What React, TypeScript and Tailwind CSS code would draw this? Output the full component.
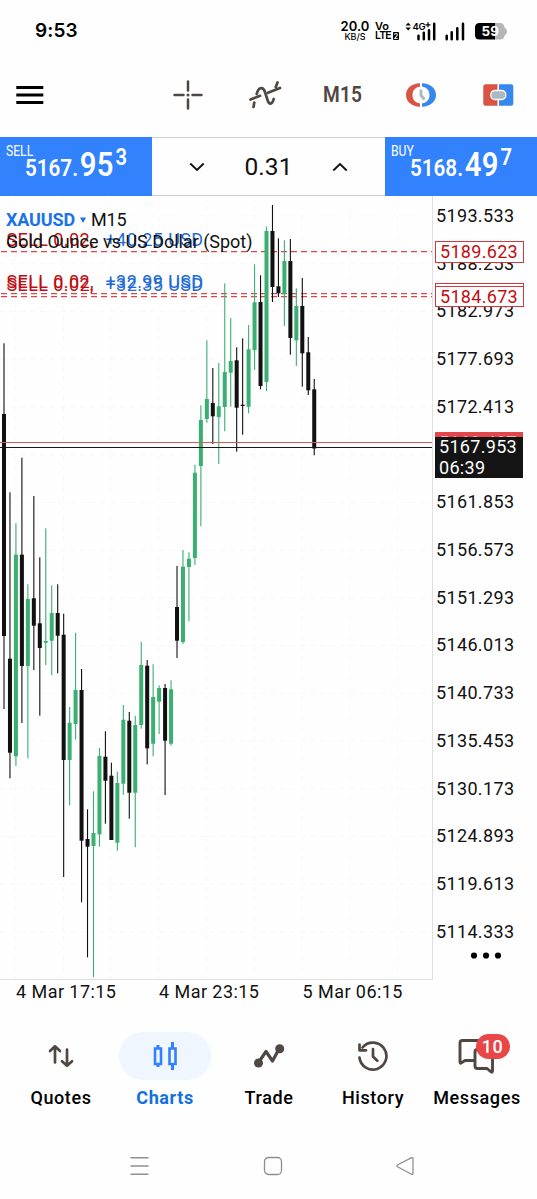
import type { ReactNode } from "react";

import clsx from "clsx";

// wick top, body top, body bottom, wick bottom, direction
type Candle = [number, number, number, number, "up" | "down"];

const CHART_TOP = 196;
const CANDLE_STEP = 5.966;

const CANDLES: Candle[] = [
  [343.3, 414, 636, 709, "down"],
  [492.3, 658.7, 752.7, 778.3, "down"],
  [523.3, 554.7, 756.3, 766, "up"],
  [457.7, 554.7, 666, 723, "down"],
  [584.3, 599, 666, 758.3, "up"],
  [496, 598.3, 625.7, 670, "down"],
  [557.3, 623.3, 648, 715.7, "down"],
  [528.3, 641, 642.8, 665, "up"],
  [585.3, 613, 640.7, 675.3, "up"],
  [584.3, 613, 635.7, 673.3, "down"],
  [613.7, 634.7, 760, 877, "down"],
  [707, 722.7, 760, 805.3, "up"],
  [632.7, 690, 724, 739.7, "up"],
  [669, 690, 840.7, 902.3, "down"],
  [809.3, 839, 846.7, 957.3, "down"],
  [791.3, 833, 846, 977, "up"],
  [748, 756, 834.3, 846.7, "up"],
  [731.3, 756.7, 780.7, 823.7, "down"],
  [762.7, 775.7, 840, 840, "down"],
  [771.7, 783, 842.7, 850.7, "up"],
  [705, 719.7, 783.7, 794.7, "up"],
  [712, 720.7, 792.7, 818.7, "down"],
  [715.7, 725, 792.7, 847.3, "up"],
  [641.7, 665, 725, 728.7, "up"],
  [660, 665.7, 748.3, 764.3, "down"],
  [664.3, 697, 743.7, 756.3, "up"],
  [685.3, 688, 701.7, 734, "up"],
  [684, 688, 740.7, 795, "down"],
  [680.3, 689.3, 743.7, 745.7, "up"],
  [566, 607, 640.7, 658, "down"],
  [550, 566.7, 642, 644, "up"],
  [552.3, 558.7, 567, 621.3, "up"],
  [464.7, 472.7, 558, 565, "up"],
  [405.3, 420, 466, 526.3, "up"],
  [340.3, 399, 419, 422.7, "up"],
  [368, 403, 416.3, 444, "down"],
  [363, 406.3, 417, 464, "up"],
  [283.3, 372, 407, 431.3, "up"],
  [318, 361, 372.7, 406.7, "up"],
  [347.3, 360.3, 407.7, 451.7, "down"],
  [338.3, 404.7, 406, 434.7, "down"],
  [325, 349.3, 406.7, 413.3, "up"],
  [264.3, 302.3, 350, 370, "up"],
  [275.3, 302, 386, 389.3, "down"],
  [226.7, 231, 382, 391, "up"],
  [205, 231, 287, 302, "down"],
  [238.3, 286.3, 293.3, 297, "down"],
  [240.3, 261, 294, 326, "up"],
  [239, 261, 338, 354.7, "down"],
  [288.3, 306, 340.3, 366, "up"],
  [278, 306, 353.3, 386.7, "down"],
  [337, 352.3, 390.3, 395, "down"],
  [379, 389.3, 448.5, 455.3, "down"],
];

const PRICES = [
  "5193.533", "5188.253", "5182.973", "5177.693", "5172.413", "5167.133", "5161.853", "5156.573",
  "5151.293", "5146.013", "5140.733", "5135.453", "5130.173", "5124.893", "5119.613", "5114.333",
];

const GRID_X = [15.7, 63.4, 111.1, 158.8, 206.6, 254.3, 302, 349.7, 397.5];
const ORDER_LINES = [251.7, 293.6, 296.6];

function StatusBar() {
  return (
    <header className="flex h-[60px] items-start justify-between pr-[29px] pl-[35px] text-black">
      <span className="mt-[18px] font-['Inter'] text-[19px] leading-[25px] font-semibold tracking-[0.1px]">9:53</span>
      <div className="mt-[21px] flex items-start font-['Inter'] font-semibold">
        <div className="flex w-[30px] flex-col items-center">
          <span className="text-[13px] leading-[11px] tracking-[0.1px]">20.0</span>
          <span className="text-[9px] leading-[9px] font-medium">KB/S</span>
        </div>
        <div className="ml-[3px] flex w-[27px] flex-col items-start pl-[2px]">
          <span className="text-[11px] leading-[10px] tracking-[-0.2px]">Vo</span>
          <span className="flex items-center text-[10.5px] leading-[10px] tracking-[-0.8px]">
            LTE
            <span className="ml-[2px] flex h-[8px] w-[6px] items-center justify-center rounded-[1px] bg-black text-[7px] leading-[7px] tracking-normal text-white">2</span>
          </span>
        </div>
        <svg className="ml-[3px]" width="82" height="22" viewBox="0 0 82 22">
          <path d="M2.500 4.600 5.200 1.800 7.900 4.600zM2.500 6.600 5.200 9.400 7.900 6.600z" fill="#000" />
          <text x="9.500" y="8.500" fontFamily="Inter" fontSize="9.500" fontWeight="600" letterSpacing="-0.300">4G</text>
          <path d="M25 1.300v5M22.500 3.800h5" stroke="#000" strokeWidth="1.200" />
          <path d="M15.500 14.800v3.400M20.800 11.800v6.400M26 9.300v8.900M31.200 2.800v15.400" stroke="#000" strokeWidth="2.500" strokeLinecap="round" />
          <path d="M43.700 14.800v3.400M48.700 11.300v6.900M54.300 7.300v10.900M60 2.800v15.400" stroke="#000" strokeWidth="2.500" strokeLinecap="round" />
        </svg>
        <svg className="-ml-[10px]" width="33" height="19" viewBox="0 0 33 19">
          <path d="M19 2h6q4 0 4.500 4.500q2.500 1 2.500 4t-2.500 4q-.5 4-4.500 4h-6z" fill="#b6b6b6" />
          <path d="M20 2H4.500Q0 2 0 6.500v7.500Q0 18.500 4.500 18.500H20z" fill="#000" />
          <text x="6.500" y="15" fontFamily="Inter" fontSize="13.500" fontWeight="700" fill="#fff">59</text>
        </svg>
      </div>
    </header>
  );
}

function Toolbar() {
  return (
    <div className="flex h-[77px] items-center pb-[8px] pl-[16px]">
      <svg width="28" height="20" viewBox="0 0 28 20">
        <path d="M.3 2.500h27M.3 10h27M.3 17.500h27" stroke="#000" strokeWidth="2.800" />
      </svg>
      <svg className="ml-[129px]" width="30" height="30" viewBox="0 0 30 30" stroke="#4f4744" strokeWidth="2.500" strokeLinecap="round">
        <path d="M15 1.500v9M15 19.500v9M1.500 15h9M19.500 15h9" />
        <path d="M15 14.900v.2" strokeWidth="3" />
      </svg>
      <svg className="ml-[45px]" width="34" height="30" viewBox="0 0 34 30" fill="none" stroke="#4f4744" strokeWidth="2.700" strokeLinecap="round">
        <path d="M5.500 27 6.300 22.500M8.700 14c1.500-6 6-8.500 8.300-2l2.700 8.500c1.500 4.500 4.500 4.200 6-1.500" />
        <path d="M2.500 19.500 12 15.800M20 12.800 32 8M27.800 7 29.500 2.500" />
      </svg>
      <span className="ml-[41px] w-[42px] origin-left scale-x-[0.87] text-[22px] leading-[28px] font-semibold tracking-[0.2px] text-[#4f4744]">M15</span>
      <svg className="ml-[40px]" width="32" height="26" viewBox="0 0 32 26">
        <path d="M15 1.300C7 1.300 1 6.300 1 13s6 11.700 14 11.700v-3.200C10 20.500 7.500 17.500 7.500 13S10 5.500 15 4.500z" fill="#d95443" />
        <path d="M17 1.300C25 1.300 31 6.300 31 13s-6 11.700-14 11.700v-3.200c5-1 7.500-4 7.500-8.500S22 5.500 17 4.500z" fill="#3687ee" />
        <path d="M16 7.500v6l3.500 4" fill="none" stroke="#adb9c1" strokeWidth="2.800" />
      </svg>
      <svg className="ml-[46px]" width="31" height="22" viewBox="0 0 31 22">
        <path d="M2.500.3H14.500V21.700H2.500Q.3 21.700.3 19.500V2.500Q.3.300 2.500.3z" fill="#d95443" />
        <path d="M16 .3h12Q30.300.3 30.300 2.500v17q0 2.200-2.300 2.200H16z" fill="#3687ee" />
        <rect x="7.800" y="6.500" width="15" height="9" rx="4" fill="#adb9c1" stroke="#fff" strokeWidth="1.300" />
      </svg>
    </div>
  );
}

function QuoteButton({ label, whole, pips, point }: { label: string; whole: string; pips: string; point: string }) {
  return (
    <button type="button" className="relative h-full w-[152px] shrink-0 overflow-hidden bg-[#3281fd] text-left text-white">
      <span className="absolute top-[5px] left-[6px] origin-left scale-x-[0.81] text-[15px] leading-[18px]">{label}</span>
      <span className="absolute top-[7px] left-[24.5px] flex origin-left scale-x-[0.86] items-baseline font-semibold">
        <span className="text-[24px] leading-[40px]">{whole}</span>
        <span className="ml-[2px] text-[34px] leading-[40px] tracking-[0.3px]">{pips}</span>
        <span className="relative -top-[11.5px] ml-[2px] text-[23.5px] leading-[24px]">{point}</span>
      </span>
    </button>
  );
}

function Chevron({ direction }: { direction: "up" | "down" }) {
  return (
    <svg width="16" height="10" viewBox="0 0 16 10" fill="none" stroke="#111" strokeWidth="1.900">
      <path d={direction === "down" ? "M1.300 1.500 8 8l6.700-6.500" : "M1.300 8.500 8 2l6.700 6.500"} />
    </svg>
  );
}

function TradePanel() {
  return (
    <div className="flex h-[59px]">
      <QuoteButton label="SELL" whole="5167." pips="95" point="3" />
      <div className="flex flex-1 items-center justify-between border-y border-[#cfcfcf] px-[37px]">
        <Chevron direction="down" />
        <span className="text-[24.5px] leading-[30px] tracking-[0.1px] text-[#111]">0.31</span>
        <Chevron direction="up" />
      </div>
      <QuoteButton label="BUY" whole="5168." pips="49" point="7" />
    </div>
  );
}

function OrderLabel({ profit, className }: { profit: string; className: string }) {
  return (
    <div className={clsx("absolute left-[6.5px] flex text-[18px] leading-[20px] tracking-[0.4px] whitespace-nowrap", className)}>
      <span className="w-[99px] text-[#c00d12]">SELL 0.02,</span>
      <span className="text-[#1f6bd6]">{profit}</span>
    </div>
  );
}

function CandleChart() {
  return (
    <div className="relative h-full w-[433px] shrink-0 border-r border-b border-[#e0e0e0]">
      <svg className="block" width="432" height="783" viewBox={`0 ${CHART_TOP} 432 783`}>
        <g stroke="#f9f9f9" strokeDasharray="5 5">
          {GRID_X.map((x) => (
            <path key={x} d={`M${x} 196V979`} />
          ))}
          {PRICES.map((price, index) => (
            <path key={price} d={`M0 ${216 + index * 47.73}H432`} />
          ))}
        </g>
        <g stroke="#d8474c" strokeWidth="1.300" strokeDasharray="6 4">
          {ORDER_LINES.map((y) => (
            <path key={y} d={`M1 ${y}H432`} />
          ))}
        </g>
        {CANDLES.map(([high, top, bottom, low, direction], index) => {
          const x = 4 + index * CANDLE_STEP;
          const color = direction === "up" ? "#39b071" : "#111";
          return (
            <g key={index} fill={color}>
              <rect x={x - 0.55} y={high} width={1.1} height={low - high} />
              <rect x={x - 2} y={top} width={4} height={bottom - top} />
            </g>
          );
        })}
        <path d="M0 442.500H432" stroke="#cf5a5a" />
        <path d="M0 447.500H432" stroke="#161616" strokeWidth="1.200" />
      </svg>
      <OrderLabel profit="+40.25 USD" className="top-[34px]" />
      <OrderLabel profit="+32.35 USD" className="top-[78.5px]" />
      <OrderLabel profit="+32.99 USD" className="top-[75.5px]" />
      <div className="absolute top-[13px] left-[6px] flex items-center text-[18px] leading-[22px] text-[#111]">
        <span className="font-bold tracking-[-0.15px] text-[#1a73e8]">XAUUSD</span>
        <svg className="mr-[5px] ml-[5px]" width="6" height="6" viewBox="0 0 6 6">
          <path d="M0 .5h6L3 6z" fill="#1a73e8" />
        </svg>
        <span className="tracking-[-0.2px]">M15</span>
      </div>
      <span className="absolute top-[35px] left-[6px] text-[18px] leading-[22px] tracking-[-0.02px] whitespace-nowrap text-[#111]">
        Gold Ounce vs US Dollar (Spot)
      </span>
    </div>
  );
}

function PriceTag({ children, className }: { children: ReactNode; className: string }) {
  return <div className={clsx("absolute pl-[4px] text-[18px] tracking-[0.3px]", className)}>{children}</div>;
}

function PriceAxis() {
  return (
    <div className="relative flex-1 text-[#111]">
      {PRICES.map((price, index) => (
        <div key={price} className={clsx("flex h-[47.73px] items-start pl-[3px] text-[18px] tracking-[0.35px]", index === 0 && "mt-[9px]")}>
          <span className="leading-[22px]">{price}</span>
        </div>
      ))}
      <PriceTag className="top-[45px] left-[2px] h-[22px] w-[89px] border border-[#d2383c] bg-white leading-[19px] text-[#c00d12]">5189.623</PriceTag>
      <PriceTag className="top-[87px] left-[2px] h-[22px] w-[89px] border border-[#d2383c] bg-white leading-[19px] text-[#c00d12]">5185.023</PriceTag>
      <PriceTag className="top-[90px] left-[2px] h-[21px] w-[89px] border border-[#d2383c] bg-white leading-[19px] text-[#c00d12]">5184.673</PriceTag>
      <PriceTag className="top-[236px] left-[2px] h-[22px] w-[88px] bg-[#e2474b] leading-[22px] text-[#f7b5b5]">5168.497</PriceTag>
      <PriceTag className="top-[241px] left-[2px] h-[41px] w-[88px] bg-[#141414] text-white">
        <div className="leading-[20px]">5167.953</div>
        <div className="leading-[22px]">06:39</div>
      </PriceTag>
      <svg className="absolute top-[756px] left-[37px]" width="32" height="7" viewBox="0 0 32 7">
        <circle cx="4" cy="3.500" r="3.100" />
        <circle cx="16" cy="3.500" r="3.100" />
        <circle cx="28" cy="3.500" r="3.100" />
      </svg>
    </div>
  );
}

function TimeAxis() {
  return (
    <div className="flex h-[52px] pt-px pl-[16px] text-[18px] leading-[22px] tracking-[0.45px] text-[#111]">
      <span className="w-[143px]">4 Mar 17:15</span>
      <span className="w-[143.5px]">4 Mar 23:15</span>
      <span>5 Mar 06:15</span>
    </div>
  );
}

function NavItem({ label, active = false, children }: { label: string; active?: boolean; children: ReactNode }) {
  return (
    <button type="button" className="flex w-[104px] shrink-0 flex-col items-center">
      <span className={clsx("flex h-[48px] w-[92px] items-center justify-center rounded-full", active && "bg-[#eff6fd]")}>{children}</span>
      <span
        className={clsx(
          "mt-[7px] ml-px text-[18px] leading-[22px] tracking-[0.6px]",
          active ? "font-bold text-[#1270e3]" : "font-medium text-black",
        )}
      >
        {label}
      </span>
    </button>
  );
}

function BottomNav() {
  return (
    <nav className="flex h-[100px] pl-[8.5px]">
      <NavItem label="Quotes">
        <svg width="26" height="24" viewBox="0 0 26 24" fill="none" stroke="#4f4744" strokeWidth="2.700" strokeLinecap="round" strokeLinejoin="round">
          <path d="M7 18.500V2.500M2 7 7 2.300 12 7M19 5.500v16M14 17.200l5 4.600 5-4.600" />
        </svg>
      </NavItem>
      <NavItem label="Charts" active>
        <svg width="26" height="30" viewBox="0 0 26 30" fill="none" stroke="#3281fd">
          <path d="M3 7.500h6v15.500H3zM17.500 7.500h6v15.500h-6z" strokeWidth="2.600" />
          <path d="M6 4v3M6 23v3M20.500 1v6M20.500 23v6" strokeWidth="3" />
        </svg>
      </NavItem>
      <NavItem label="Trade">
        <svg width="32" height="26" viewBox="0 0 32 26" fill="none" stroke="#4f4744" strokeWidth="3.200" strokeLinejoin="round">
          <path d="M5.500 19.500 13 8.500l6.500 9.500 7-13" />
          <circle cx="5.500" cy="20" r="4.500" fill="#4f4744" stroke="none" />
          <circle cx="26.700" cy="5.700" r="4.500" fill="#4f4744" stroke="none" />
        </svg>
      </NavItem>
      <NavItem label="History">
        <svg width="32" height="32" viewBox="0 0 32 32" fill="none" stroke="#4f4744" strokeWidth="2.700" strokeLinecap="round" strokeLinejoin="round">
          <path d="M2.500 17.500A13.500 13.500 0 1 0 5.500 7.500" />
          <path d="M2.500 4.500v5.800h6.500M16 9v7.500l4.300 4.300" />
        </svg>
      </NavItem>
      <NavItem label="Messages">
        <span className="relative">
          <svg width="38" height="36" viewBox="0 0 38 36" fill="none" stroke="#4f4744" strokeWidth="2.900" strokeLinecap="round" strokeLinejoin="round">
            <path d="M32 12V5q0-2.500-2.500-2.500H4.500Q2 2.500 2 5v19q0 2 1.500.7L7 22.500h9" />
            <path d="M34.500 16v17q0 2-1.700.7L29 30.500H19.500Q17 30.500 17 28V14q0-2.500 2.500-2.500H34" />
          </svg>
          <span className="absolute -top-[4px] left-[18px] flex h-[25px] w-[34px] items-center justify-center rounded-full bg-[#e94747] text-[18px] leading-[24px] font-medium tracking-[0.5px] text-white">
            10
          </span>
        </span>
      </NavItem>
    </nav>
  );
}

function SystemNav() {
  return (
    <div className="flex items-center pt-[24px] pl-[130px]">
      <svg width="19" height="20" viewBox="0 0 19 20" stroke="#8f8f8f" strokeWidth="1.500">
        <path d="M.5 1.800h18M.5 10h18M.5 18.200h18" />
      </svg>
      <svg className="ml-[114px]" width="20" height="20" viewBox="0 0 20 20" fill="none" stroke="#8f8f8f" strokeWidth="1.300">
        <rect x="1.500" y="1.500" width="17" height="17" rx="4" />
      </svg>
      <svg className="ml-[112px]" width="20" height="20" viewBox="0 0 20 20" fill="none" stroke="#8f8f8f" strokeWidth="1.300" strokeLinejoin="round">
        <path d="M16.600 1.700 2.500 9q-1.300.9 0 1.800l14.100 7.500q1.400.5 1.400-1V2.700q0-1.500-1.400-1z" />
      </svg>
    </div>
  );
}

export default function App() {
  return (
    <main className="flex h-[1199px] w-[537px] flex-col overflow-hidden bg-[#fefefe] font-['Roboto',sans-serif]">
      <StatusBar />
      <Toolbar />
      <TradePanel />
      <section className="flex h-[784px] shrink-0">
        <CandleChart />
        <PriceAxis />
      </section>
      <TimeAxis />
      <BottomNav />
      <SystemNav />
    </main>
  );
}
